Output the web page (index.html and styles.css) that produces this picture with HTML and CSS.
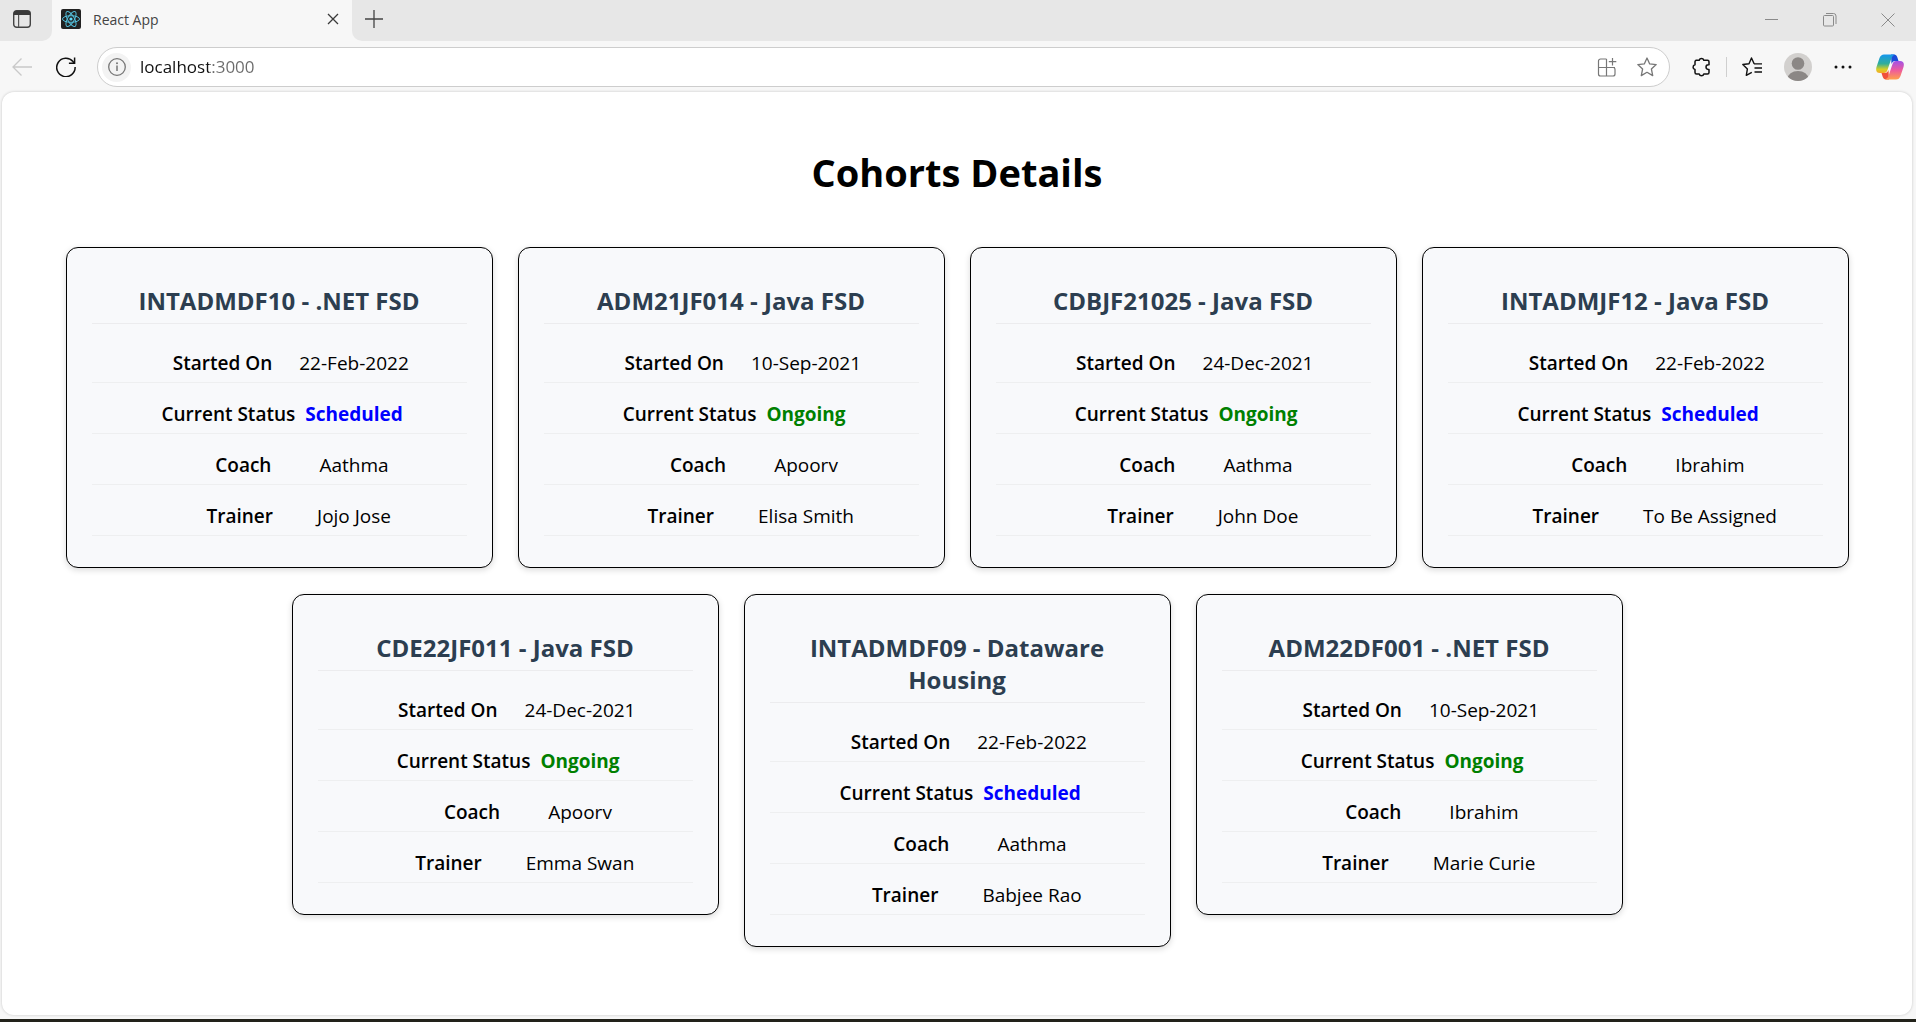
FILE: index.html
```html
<!DOCTYPE html>
<html lang="en">
<head>
<meta charset="utf-8">
<meta name="viewport" content="width=device-width, initial-scale=1">
<title>React App</title>
<link rel="stylesheet" href="styles.css">
</head>
<body>
<div class="browser">
  <header class="tab-strip">
    <div class="tab-menu">
      <button class="icon-button" type="button" aria-label="Tab actions menu">
        <svg width="18" height="18" viewBox="0 0 18 18"><rect x="0.7" y="0.7" width="16.6" height="16.6" rx="3" fill="none" stroke="#444" stroke-width="1.4"/><path d="M0.7 5V3.5A3 3 0 0 1 3.700.7H14.300A3 3 0 0 1 17.300 3.500V5Z" fill="#3a3a3a"/><path d="M5.600 5V17" stroke="#555" stroke-width="1.200"/></svg>
      </button>
    </div>
    <div class="tab">
      <svg class="favicon" width="20" height="20" viewBox="0 0 20 20"><rect width="20" height="20" rx="2" fill="#222"/><g fill="none" stroke="#53bfdb" stroke-width="1"><ellipse cx="10" cy="10" rx="8.500" ry="3.300"/><ellipse cx="10" cy="10" rx="8.500" ry="3.300" transform="rotate(60 10 10)"/><ellipse cx="10" cy="10" rx="8.500" ry="3.300" transform="rotate(120 10 10)"/></g><circle cx="10" cy="10" r="1.600" fill="#61dafb"/></svg>
      <span class="tab-title">React App</span>
      <button class="icon-button" type="button" aria-label="Close tab">
        <svg width="12" height="12" viewBox="0 0 12 12"><path d="M1 1L11 11M11 1L1 11" stroke="#3a3a3a" stroke-width="1.300"/></svg>
      </button>
    </div>
    <div class="strip-rest">
      <button class="icon-button" type="button" aria-label="New tab">
        <svg width="18" height="18" viewBox="0 0 18 18"><path d="M9 0V18M0 9H18" stroke="#444" stroke-width="1.300"/></svg>
      </button>
      <div class="window-controls">
        <button class="icon-button" type="button" aria-label="Minimize"><svg width="14" height="14" viewBox="0 0 14 14"><path d="M0 6.500H13" stroke="#8a8a8a"/></svg></button>
        <button class="icon-button" type="button" aria-label="Restore"><svg width="14" height="14" viewBox="0 0 14 14"><rect x="0.500" y="2.500" width="10" height="10.500" rx="1" fill="none" stroke="#8a8a8a"/><path d="M3 .5H10.500A2.500 2.500 0 0 1 13 3V11" fill="none" stroke="#8a8a8a"/></svg></button>
        <button class="icon-button" type="button" aria-label="Close window"><svg width="14" height="14" viewBox="0 0 14 14"><path d="M.5 .5L13.500 13.500M13.500 .5L.5 13.500" stroke="#8a8a8a"/></svg></button>
      </div>
    </div>
  </header>

  <nav class="toolbar" aria-label="Browser toolbar">
    <button class="icon-button" type="button" aria-label="Back" disabled>
      <svg width="20" height="18" viewBox="0 0 20 18"><path d="M20 9H1M9.500 .5L1 9L9.500 17.500" fill="none" stroke="#c9c9c9" stroke-width="1.300"/></svg>
    </button>
    <button class="icon-button" type="button" aria-label="Refresh">
      <svg width="20" height="20" viewBox="0 0 20 20"><path d="M19.100 10A9.200 9.200 0 1 1 17 4.600L18.400 6M18.600 .5V6.200H12.900" fill="none" stroke="#111" stroke-width="1.500"/></svg>
    </button>
    <div class="address-bar">
      <button class="icon-button site-info" type="button" aria-label="View site information">
        <svg width="18" height="18" viewBox="0 0 18 18"><circle cx="9" cy="9" r="8.300" fill="none" stroke="#767676" stroke-width="1.300"/><path d="M9 7.500V13" stroke="#767676" stroke-width="1.500"/><circle cx="9" cy="5.200" r="1" fill="#767676"/></svg>
      </button>
      <input class="address" type="text" value="localhost:3000" aria-label="Address" spellcheck="false">
      <button class="icon-button" type="button" aria-label="App available">
        <svg width="20" height="20" viewBox="0 0 20 20"><path d="M1.500 10.500H18M9.500 2V19M9.500 2H3.500A2 2 0 0 0 1.500 4V17A2 2 0 0 0 3.500 19H16A2 2 0 0 0 18 17V12.500A2 2 0 0 0 16 10.500M15.500 1V8.500M11.800 4.700H19.300" fill="none" stroke="#777" stroke-width="1.200"/></svg>
      </button>
      <button class="icon-button" type="button" aria-label="Add to favorites">
        <svg width="20" height="20" viewBox="0 0 20 20"><path d="M10 1L12.700 6.900L19.200 7.600L14.400 12L15.700 18.600L10 15.300L4.300 18.600L5.600 12L.8 7.600L7.300 6.900Z" fill="none" stroke="#777" stroke-width="1.300" stroke-linejoin="round"/></svg>
      </button>
    </div>
    <div class="tools">
      <button class="icon-button" type="button" aria-label="Extensions">
        <svg width="20" height="20" viewBox="0 0 20 20"><path d="M4.500 3.300H8.200A2.400 2.400 0 0 1 12.800 3.300H16.500Q18 3.300 18 4.800V7.800H17.300A2.300 2.300 0 0 0 17.300 12.400H18V15.500Q18 17 16.500 17H12.800A2.400 2.400 0 0 1 8.200 17H5.500Q4 17 4 15.500V12.500A2.400 2.400 0 0 1 4 7.800V4.800Q4 3.300 5.500 3.300" fill="none" stroke="#111" stroke-width="1.500" stroke-linejoin="round"/></svg>
      </button>
      <span class="separator"></span>
      <button class="icon-button" type="button" aria-label="Favorites">
        <svg width="20" height="20" viewBox="0 0 20 20"><path d="M12.500 6.500H12L9.500 1L7 6.700L.8 7.500L5.400 11.900L4.300 18.400L9.800 15.300M12 6.900H20M12.500 11H20M12.500 15H20" fill="none" stroke="#111" stroke-width="1.400" stroke-linejoin="round"/></svg>
      </button>
      <button class="icon-button" type="button" aria-label="Profile">
        <svg width="28" height="28" viewBox="0 0 28 28"><clipPath id="avatar"><circle cx="14" cy="14" r="14"/></clipPath><g clip-path="url(#avatar)"><rect width="28" height="28" fill="#d2d0ce"/><circle cx="14" cy="10.500" r="6.300" fill="#8b8785"/><ellipse cx="14" cy="26" rx="10.500" ry="8" fill="#8b8785"/></g></svg>
      </button>
      <button class="icon-button" type="button" aria-label="Settings and more">
        <svg width="18" height="4" viewBox="0 0 18 4"><g fill="#111"><circle cx="2" cy="2" r="1.500"/><circle cx="9" cy="2" r="1.500"/><circle cx="16" cy="2" r="1.500"/></g></svg>
      </button>
      <button class="icon-button copilot" type="button" aria-label="Copilot">
        <svg width="28" height="26" viewBox="0 0 28 26"><defs><linearGradient id="cool" x1="0" y1="0" x2="0" y2="1"><stop offset="0" stop-color="#1597ef"/><stop offset=".5" stop-color="#2fae9a"/><stop offset=".8" stop-color="#d5cf24"/><stop offset="1" stop-color="#f7a928"/></linearGradient><linearGradient id="warm" x1="0" y1="0" x2="0" y2="1"><stop offset="0" stop-color="#a152e8"/><stop offset=".5" stop-color="#ee5b9d"/><stop offset="1" stop-color="#ffa04a"/></linearGradient></defs><path d="M15 .5H18Q20.500 .5 21.400 3.500L22.500 7H19Q16.500 7 15.500 10Z" fill="#1b4bd8"/><path d="M13 25.500H10Q7.500 25.500 6.600 22.500L5.500 19H9Q11.500 19 12.500 16Z" fill="#f0503c"/><path d="M8 .5H19Q16.500 1 15.500 4L11.500 16Q10.500 19 8 19H4Q-1 19 .5 13L3.500 4Q4.800 .5 8 .5Z" fill="url(#cool)"/><path d="M20 25.500H9Q11.500 25 12.500 22L16.500 10Q17.500 7 20 7H24Q29 7 27.500 13L24.500 22Q23.200 25.500 20 25.500Z" fill="url(#warm)"/></svg>
      </button>
    </div>
  </nav>

  <main class="page">
    <h1 class="page-title">Cohorts Details</h1>
    <div class="cards">
      <article class="card">
        <h3 class="card-title">INTADMDF10 - .NET FSD</h3>
        <dl class="details">
          <div class="row started"><dt>Started On</dt><dd>22-Feb-2022</dd></div>
          <div class="row status"><dt>Current Status</dt><dd class="scheduled">Scheduled</dd></div>
          <div class="row coach"><dt>Coach</dt><dd>Aathma</dd></div>
          <div class="row trainer"><dt>Trainer</dt><dd>Jojo Jose</dd></div>
        </dl>
      </article>
      <article class="card">
        <h3 class="card-title">ADM21JF014 - Java FSD</h3>
        <dl class="details">
          <div class="row started"><dt>Started On</dt><dd>10-Sep-2021</dd></div>
          <div class="row status"><dt>Current Status</dt><dd class="ongoing">Ongoing</dd></div>
          <div class="row coach"><dt>Coach</dt><dd>Apoorv</dd></div>
          <div class="row trainer"><dt>Trainer</dt><dd>Elisa Smith</dd></div>
        </dl>
      </article>
      <article class="card">
        <h3 class="card-title">CDBJF21025 - Java FSD</h3>
        <dl class="details">
          <div class="row started"><dt>Started On</dt><dd>24-Dec-2021</dd></div>
          <div class="row status"><dt>Current Status</dt><dd class="ongoing">Ongoing</dd></div>
          <div class="row coach"><dt>Coach</dt><dd>Aathma</dd></div>
          <div class="row trainer"><dt>Trainer</dt><dd>John Doe</dd></div>
        </dl>
      </article>
      <article class="card">
        <h3 class="card-title">INTADMJF12 - Java FSD</h3>
        <dl class="details">
          <div class="row started"><dt>Started On</dt><dd>22-Feb-2022</dd></div>
          <div class="row status"><dt>Current Status</dt><dd class="scheduled">Scheduled</dd></div>
          <div class="row coach"><dt>Coach</dt><dd>Ibrahim</dd></div>
          <div class="row trainer"><dt>Trainer</dt><dd>To Be Assigned</dd></div>
        </dl>
      </article>
      <article class="card">
        <h3 class="card-title">CDE22JF011 - Java FSD</h3>
        <dl class="details">
          <div class="row started"><dt>Started On</dt><dd>24-Dec-2021</dd></div>
          <div class="row status"><dt>Current Status</dt><dd class="ongoing">Ongoing</dd></div>
          <div class="row coach"><dt>Coach</dt><dd>Apoorv</dd></div>
          <div class="row trainer"><dt>Trainer</dt><dd>Emma Swan</dd></div>
        </dl>
      </article>
      <article class="card">
        <h3 class="card-title">INTADMDF09 - Dataware Housing</h3>
        <dl class="details">
          <div class="row started"><dt>Started On</dt><dd>22-Feb-2022</dd></div>
          <div class="row status"><dt>Current Status</dt><dd class="scheduled">Scheduled</dd></div>
          <div class="row coach"><dt>Coach</dt><dd>Aathma</dd></div>
          <div class="row trainer"><dt>Trainer</dt><dd>Babjee Rao</dd></div>
        </dl>
      </article>
      <article class="card">
        <h3 class="card-title">ADM22DF001 - .NET FSD</h3>
        <dl class="details">
          <div class="row started"><dt>Started On</dt><dd>10-Sep-2021</dd></div>
          <div class="row status"><dt>Current Status</dt><dd class="ongoing">Ongoing</dd></div>
          <div class="row coach"><dt>Coach</dt><dd>Ibrahim</dd></div>
          <div class="row trainer"><dt>Trainer</dt><dd>Marie Curie</dd></div>
        </dl>
      </article>
    </div>
  </main>
</div>
</body>
</html>
```
FILE: styles.css
```css
* {
  box-sizing: border-box;
}

body {
  margin: 0;
  color: #000;
  background: #f7f7f7;
  font-family: "Segoe UI", "Open Sans", "Noto Sans", sans-serif;
}

.browser {
  display: flex;
  flex-direction: column;
  min-height: 100vh;
  border-bottom: 3px solid #22221a;
}

.icon-button {
  display: flex;
  flex: none;
  align-items: center;
  justify-content: center;
  padding: 0;
  border: 0;
  background: none;
}

/* Tab strip */
.tab-strip {
  display: flex;
  height: 41px;
}

.tab-menu {
  display: flex;
  align-items: center;
  width: 52px;
  padding: 0 0 4px 13px;
  background: #e7e7e7;
  border-bottom-right-radius: 10px;
}

.tab {
  display: flex;
  align-items: center;
  width: 300px;
  padding: 0 13px 3px 9px;
}

.tab-title {
  flex: 1;
  margin-left: 12px;
  color: #444;
  font-size: 14px;
}

.strip-rest {
  display: flex;
  flex: 1;
  align-items: center;
  justify-content: space-between;
  padding: 0 21px 3px 13px;
  background: #e7e7e7;
  border-bottom-left-radius: 10px;
}

.window-controls {
  display: flex;
  gap: 44px;
  padding-top: 2px;
}

/* Toolbar */
.toolbar {
  display: flex;
  align-items: center;
  gap: 24px;
  height: 51px;
  padding: 1px 12px 0;
}

.address-bar {
  display: flex;
  flex: 1;
  align-items: center;
  gap: 20px;
  height: 40px;
  margin-left: -3px;
  padding: 0 12px 0 4px;
  border: 1px solid #cdcdcd;
  border-radius: 20px;
  background: #fff;
}

.site-info {
  width: 29px;
  height: 29px;
  border-radius: 50%;
  background: #f3f3f3;
}

.address {
  flex: 1;
  min-width: 0;
  margin-left: -11px;
  padding: 0;
  border: 0;
  outline: 0;
  background: linear-gradient(90deg, #111 69px, #6b6b6b 69px) text;
  color: #111;
  -webkit-text-fill-color: transparent;
  font: 17px/24px "Segoe UI", "Open Sans", sans-serif;
}

.tools {
  display: flex;
  align-items: center;
  gap: 22px;
  margin-left: -3px;
}

.separator {
  width: 1px;
  height: 20px;
  margin: 0 -7px;
  background: #cfcfcf;
}

.copilot {
  margin-left: 2px;
}

/* Page */
.page {
  flex: 1;
  margin: 0 4px 4px 2px;
  padding: 53px 25px;
  border-radius: 12px;
  background: #fff;
  box-shadow: 0 0 3px rgba(0, 0, 0, 0.2);
}

.page-title {
  margin: 0 0 48px;
  font-size: 38px;
  font-weight: 700;
  line-height: 54px;
  text-align: center;
}

.cards {
  display: flex;
  flex-wrap: wrap;
  align-items: flex-start;
  justify-content: center;
  gap: 26px 25px;
}

.card {
  width: 427px;
  max-width: 100%;
  padding: 37px 25px 31px;
  border: 1px solid #000;
  border-radius: 12px;
  background: #f8f9fb;
  box-shadow: 0 2px 6px rgba(0, 0, 0, 0.15);
}

.card-title {
  margin: 0 0 8px;
  padding-bottom: 6px;
  border-bottom: 1px solid #ececee;
  color: #2c3e50;
  font-size: 24px;
  font-weight: 700;
  line-height: 32px;
  text-align: center;
}

.details {
  margin: 0;
  font-size: 19px;
  line-height: 28px;
}

.row {
  display: flex;
  height: 51px;
  padding-top: 17px;
  border-bottom: 1px solid #eeeff0;
  white-space: nowrap;
}

/* Values centre on the right 60% of the card, labels sit against them. */
.row::after {
  flex: 1 1 0;
  content: "";
}

.row dt {
  flex: 1 1 40%;
  font-weight: 600;
  text-align: right;
}

.row dd {
  margin: 0;
}

.started dt {
  padding-right: 27px;
}

.status dt {
  padding-right: 10px;
}

.coach dt {
  padding-right: 48px;
}

.trainer dt {
  padding-right: 44px;
}

.scheduled,
.ongoing {
  font-weight: 700;
}

.scheduled {
  color: #00f;
}

.ongoing {
  color: #008000;
}
```
